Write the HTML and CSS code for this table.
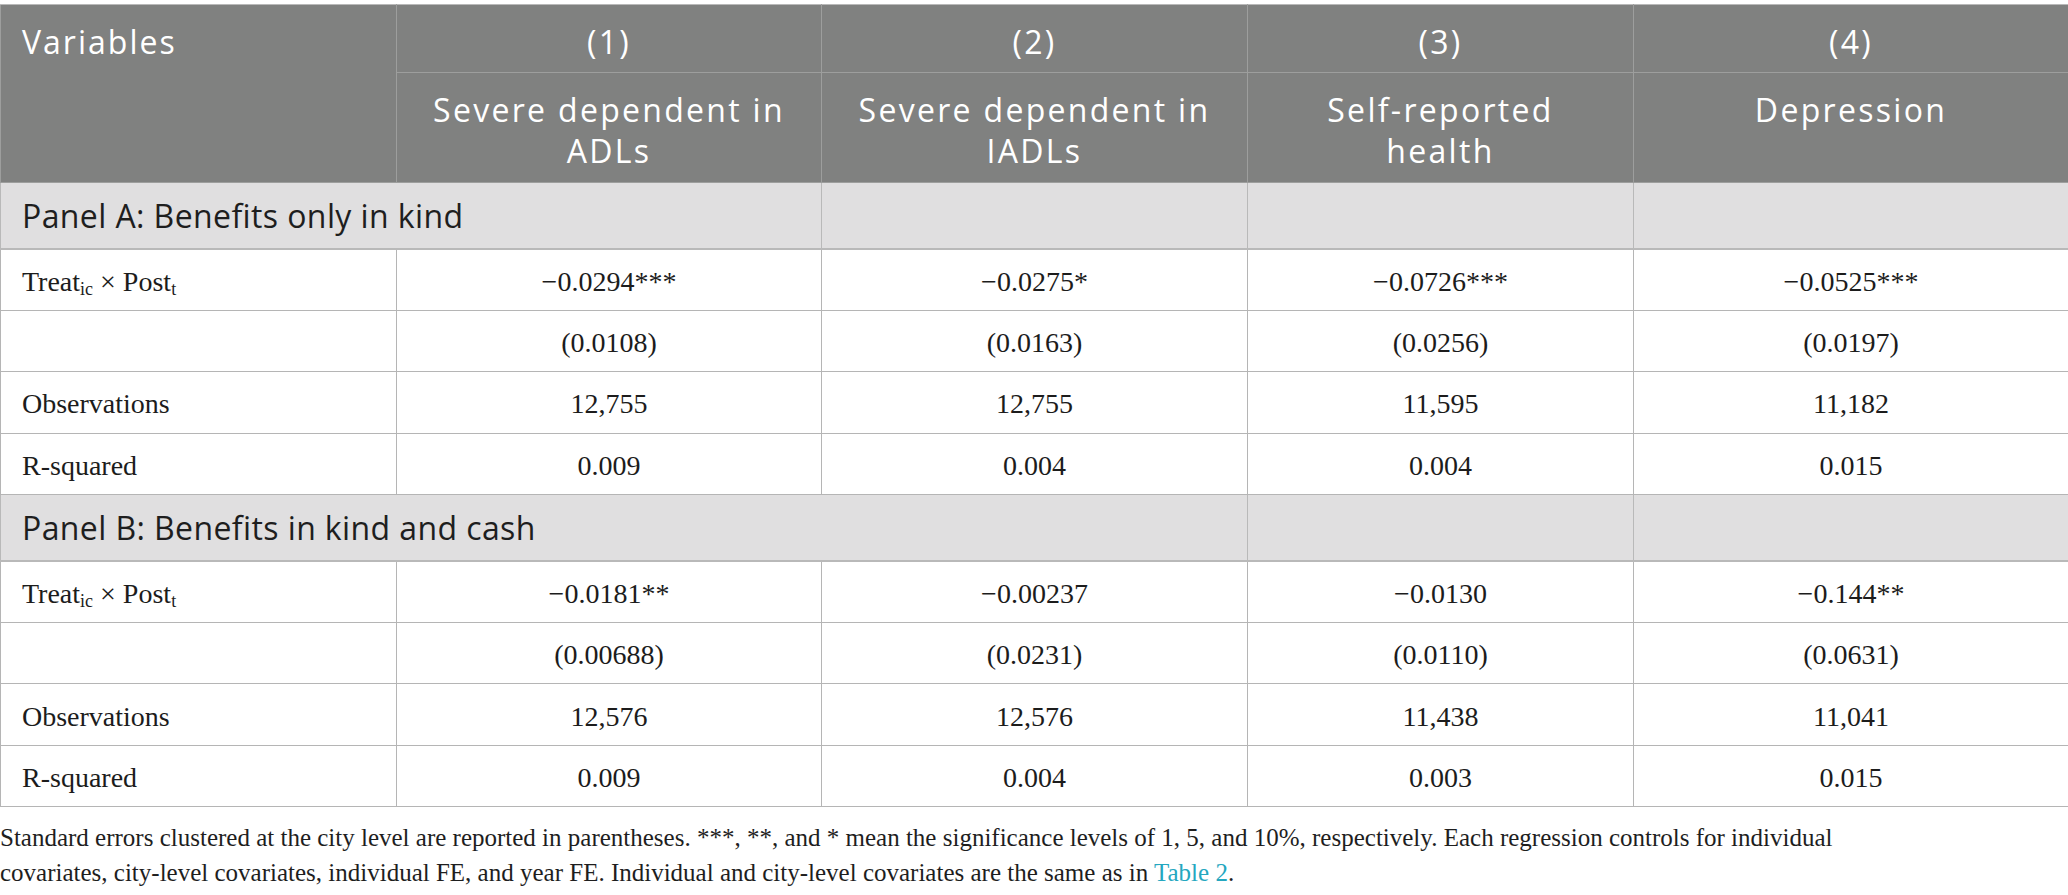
FILE: index.html
```html
<!DOCTYPE html>
<html lang="en">
<head>
<meta charset="utf-8">
<title>Table</title>
<link rel="stylesheet" href="styles.css">
</head>
<body>
<table class="results">
  <colgroup>
    <col class="col-var">
    <col class="col-1">
    <col class="col-2">
    <col class="col-3">
    <col class="col-4">
  </colgroup>
  <thead>
    <tr class="head-num">
      <th rowspan="2" class="head-var">Variables</th>
      <th>(1)</th>
      <th>(2)</th>
      <th>(3)</th>
      <th>(4)</th>
    </tr>
    <tr class="head-name">
      <th>Severe dependent in<br>ADLs</th>
      <th>Severe dependent in<br>IADLs</th>
      <th>Self-reported<br>health</th>
      <th>Depression</th>
    </tr>
  </thead>
  <tbody>
    <tr class="panel">
      <td colspan="2" class="panel-title">Panel A: Benefits only in kind</td>
      <td></td><td></td><td></td>
    </tr>
    <tr class="data">
      <td class="label">Treat<span class="sub">ic</span> × Post<span class="sub">t</span></td>
      <td>−0.0294***</td><td>−0.0275*</td><td>−0.0726***</td><td>−0.0525***</td>
    </tr>
    <tr class="data">
      <td class="label"></td>
      <td>(0.0108)</td><td>(0.0163)</td><td>(0.0256)</td><td>(0.0197)</td>
    </tr>
    <tr class="data">
      <td class="label">Observations</td>
      <td>12,755</td><td>12,755</td><td>11,595</td><td>11,182</td>
    </tr>
    <tr class="data">
      <td class="label">R-squared</td>
      <td>0.009</td><td>0.004</td><td>0.004</td><td>0.015</td>
    </tr>
    <tr class="panel">
      <td colspan="3" class="panel-title">Panel B: Benefits in kind and cash</td>
      <td></td><td></td>
    </tr>
    <tr class="data">
      <td class="label">Treat<span class="sub">ic</span> × Post<span class="sub">t</span></td>
      <td>−0.0181**</td><td>−0.00237</td><td>−0.0130</td><td>−0.144**</td>
    </tr>
    <tr class="data">
      <td class="label"></td>
      <td>(0.00688)</td><td>(0.0231)</td><td>(0.0110)</td><td>(0.0631)</td>
    </tr>
    <tr class="data">
      <td class="label">Observations</td>
      <td>12,576</td><td>12,576</td><td>11,438</td><td>11,041</td>
    </tr>
    <tr class="data">
      <td class="label">R-squared</td>
      <td>0.009</td><td>0.004</td><td>0.003</td><td>0.015</td>
    </tr>
  </tbody>
</table>
<p class="note">Standard errors clustered at the city level are reported in parentheses. ***, **, and * mean the significance levels of 1, 5, and 10%, respectively. Each regression controls for individual covariates, city-level covariates, individual FE, and year FE. Individual and city-level covariates are the same as in <a class="ref" href="#table2">Table 2</a>.</p>
</body>
</html>
```

FILE: styles.css
```css
html, body {
  margin: 0;
  padding: 0;
  background: #ffffff;
}

.results {
  border-collapse: collapse;
  table-layout: fixed;
  width: 2068px;
  margin-top: 4px;
}

.col-var { width: 396px; }
.col-1 { width: 425px; }
.col-2 { width: 426px; }
.col-3 { width: 386px; }
.col-4 { width: 435px; }

.results th {
  background: #808180;
  color: #ffffff;
  font-family: "Open Sans", "Noto Sans", sans-serif;
  font-weight: 400;
  font-size: 32px;
  letter-spacing: 2.3px;
  line-height: 41px;
  text-align: center;
  vertical-align: top;
  padding: 16px 6px 10px;
  border: 1px solid #9d9e9d;
}

.results .head-name th {
  padding-bottom: 11px;
}

.results thead tr:first-child th {
  border-top-color: #b9b9b9;
}

.results th.head-var {
  text-align: left;
  padding-left: 21px;
  letter-spacing: 2px;
}

.panel td {
  background: #e0dfe0;
  height: 64.5px;
  padding: 0;
  border: 1px solid #b9b9b9;
  border-bottom-width: 2px;
}

.panel td.panel-title {
  font-family: "Open Sans", "Noto Sans", sans-serif;
  font-size: 32px;
  letter-spacing: 0.4px;
  line-height: 41px;
  color: #1e1e1e;
  padding-left: 21px;
  vertical-align: middle;
}

.data td {
  font-family: "Liberation Serif", "Times New Roman", serif;
  font-size: 28px;
  color: #1c1c1c;
  text-align: center;
  vertical-align: middle;
  height: 56.4px;
  padding: 4px 10px 0;
  border: 1px solid #b5b5b5;
}

.data td.label {
  text-align: left;
  padding-left: 21px;
}

.sub {
  font-size: 18px;
  line-height: 0;
  vertical-align: -4px;
}

.note {
  margin: 13px 0 0 0;
  max-width: 1880px;
  font-family: "Liberation Serif", "Times New Roman", serif;
  font-size: 25px;
  line-height: 35px;
  color: #1e1e1e;
}

.ref {
  color: #25a7bf;
  text-decoration: none;
}
```
